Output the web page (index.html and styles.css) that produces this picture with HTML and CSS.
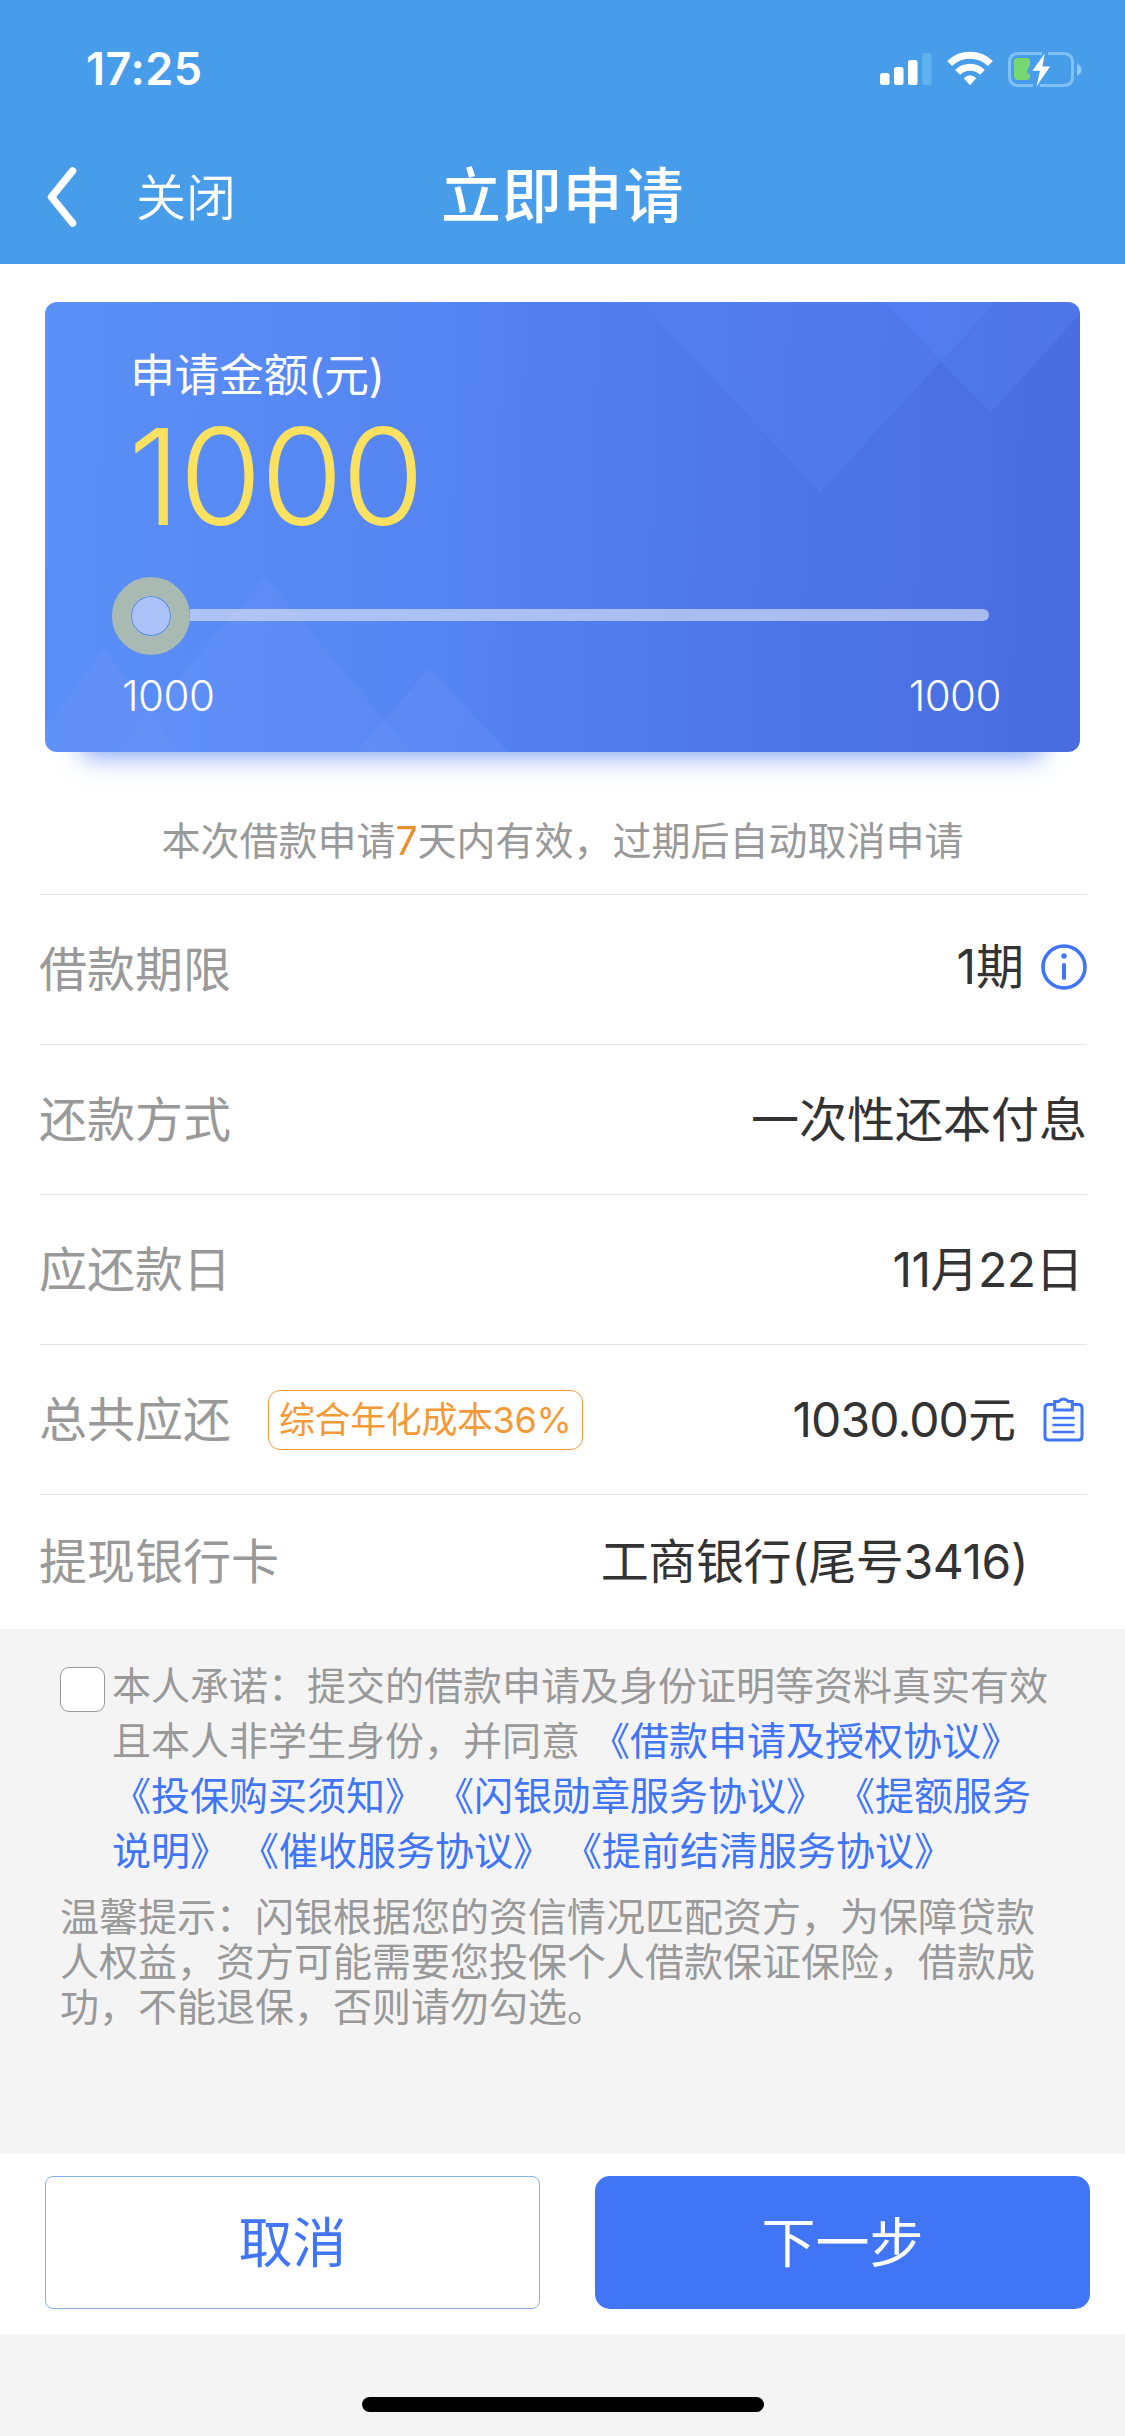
FILE: index.html
```
<!DOCTYPE html>
<html lang="zh-CN">
<head>
    <meta charset="UTF-8">
    <meta name="viewport" content="width=device-width, initial-scale=1.0">
    <title>立即申请</title>
    <link rel="stylesheet" href="styles.css">
</head>
<body>
    <header class="header">
        <div class="status-bar">
            <span class="time">17:25</span>
            <div class="status-icons">
                <svg width="52" height="36" viewBox="0 0 52 36" fill="#fff">
                    <rect x="0" y="22" width="9.5" height="12" rx="2.5"/>
                    <rect x="14" y="16" width="9.5" height="18" rx="2.5"/>
                    <rect x="28" y="9" width="9.5" height="25" rx="2.5"/>
                    <rect x="42" y="2" width="9.5" height="32" rx="2.5" fill="#60b2ed"/>
                </svg>
                <svg width="46" height="36" viewBox="0 0 46 36" fill="none" stroke="#fff" stroke-width="7">
                    <path d="M2.6 12.6 A29 29 0 0 1 43.4 12.6"/>
                    <path d="M10.6 21.4 A17.5 17.5 0 0 1 35.4 21.4"/>
                    <path d="M23 34.3 L16.8 27.2 Q23 21.4 29.2 27.2 Z" fill="#fff" stroke="none"/>
                </svg>
                <svg width="74" height="36" viewBox="0 0 74 36">
                    <path d="M34 2.5 H11 Q1.5 2.5 1.5 11.5 V25.5 Q1.5 34.5 11 34.5 H25 M31.5 34.5 H55 Q64.5 34.5 64.5 25.5 V11.5 Q64.5 2.5 55 2.5 H40" fill="none" stroke="#7fc1f2" stroke-width="3"/>
                    <path d="M69 12.5 Q73.5 15 73.5 18.5 Q73.5 22.5 69 25 Z" fill="#8fc9f4"/>
                    <path d="M9.5 7 H19 Q22 7 22 10 V14 L19 20.5 Q19 23 22 23 V26 Q22 29 19 29 H10 Q6 29 6 25 V10 Q6 7 9.5 7 Z" fill="#76d672"/>
                    <path d="M36.7 2.5 L24.4 19.8 H32 L28.4 35.5 L42 15.5 H34.5 Z" fill="#fff"/>
                </svg>
            </div>
        </div>
        <nav class="nav">
            <svg class="back" width="30" height="60" viewBox="0 0 30 60" fill="none" stroke="#fff" stroke-width="7.5" stroke-linecap="round" stroke-linejoin="round">
                <path d="M25.5 4 L4.5 30 L25.5 56"/>
            </svg>
            <span class="close">关闭</span>
            <h1 class="title">立即申请</h1>
        </nav>
    </header>

    <main class="main">
        <section class="card">
            <svg class="card-bg" width="1035" height="450" viewBox="0 0 1035 450" fill="#7a9dff" fill-opacity="0.2">
                <path d="M59.5 346 L0 427 V450 H133 Z"/>
                <path d="M220 275 L70 450 H366 Z"/>
                <path d="M384.5 366 L311 450 H463 Z"/>
                <g fill="#5f90ff" fill-opacity="0.24">
                    <path d="M596 0 L775 190 L951 0 Z"/>
                    <path d="M839 0 L945.5 111 L1035 12 V0 Z"/>
                </g>
            </svg>
            <div class="amount-label">申请金额(元)</div>
            <div class="amount">1000</div>
            <div class="slider">
                <div class="thumb"></div>
                <div class="track"></div>
            </div>
            <div class="range">
                <span>1000</span>
                <span>1000</span>
            </div>
        </section>
        <p class="notice">本次借款申请<em>7</em>天内有效，过期后自动取消申请</p>

        <div class="list">
            <div class="row">
                <span class="label">借款期限</span>
                <span class="value value-term">1期</span>
                <svg class="icon-info" width="46" height="46" viewBox="0 0 46 46">
                    <circle cx="23" cy="23" r="21" fill="none" stroke="#4076f6" stroke-width="3.6"/>
                    <circle cx="23" cy="12" r="2.7" fill="#4076f6"/>
                    <path d="M23 21 V34" stroke="#4076f6" stroke-width="4" stroke-linecap="round"/>
                </svg>
            </div>
            <div class="row">
                <span class="label">还款方式</span>
                <span class="value">一次性还本付息</span>
            </div>
            <div class="row">
                <span class="label">应还款日</span>
                <span class="value value-date">11月22日</span>
            </div>
            <div class="row">
                <span class="label">总共应还</span>
                <span class="badge">综合年化成本36%</span>
                <span class="value value-total">1030.00元</span>
                <svg class="icon-bill" width="41" height="45" viewBox="0 0 41 45" fill="none" stroke="#4076f6" stroke-width="3">
                    <path d="M11 7.5 H5.5 Q2 7.5 2 11 V39.5 Q2 43 5.5 43 H35.5 Q39 43 39 39.5 V11 Q39 7.5 35.5 7.5 H30"/>
                    <path d="M11.7 4.5 H15.5 Q20.5 -0.5 25.5 4.5 H29.3 V13 H11.7 Z"/>
                    <path d="M10.5 21 H30.5 M10.5 28 H30.5 M10.5 35 H30.5" stroke-width="2.6" stroke-linecap="round"/>
                </svg>
            </div>
            <div class="row row-bank">
                <span class="label">提现银行卡</span>
                <span class="value value-bank">工商银行(尾号3416)</span>
            </div>
        </div>
    </main>

    <section class="agreement">
        <div class="promise">
            <span class="checkbox"></span>
            <p class="promise-text">本人承诺：提交的借款申请及身份证明等资料真实有效<br>且本人非学生身份，并同意 <a>《借款申请及授权协议》</a><br><a>《投保购买须知》</a> <a>《闪银勋章服务协议》</a> <a>《提额服务<br>说明》</a> <a>《催收服务协议》</a> <a>《提前结清服务协议》</a></p>
        </div>
        <p class="tips">温馨提示：闪银根据您的资信情况匹配资方，为保障贷款<br>人权益，资方可能需要您投保个人借款保证保险，借款成<br>功，不能退保，否则请勿勾选。</p>
    </section>

    <footer class="footer">
        <button class="btn btn-cancel">取消</button>
        <button class="btn btn-next">下一步</button>
    </footer>
    <div class="home-indicator"></div>
</body>
</html>
```
FILE: styles.css
```
* {
    box-sizing: border-box;
}
body {
    margin: 0;
    width: 1125px;
    height: 2436px;
    background-color: #f4f4f4;
    font-family: Inter, "Noto Sans CJK SC", sans-serif;
    color: #333;
    text-spacing-trim: space-all;
    overflow: hidden;
}
p, h1 {
    margin: 0;
    font-weight: normal;
}
svg {
    display: block;
    flex: none;
}

/* header */
.header {
    height: 264px;
    background-color: #489dea;
    color: #fff;
}
.status-bar {
    display: flex;
    justify-content: space-between;
    height: 137px;
    padding: 51px 43px 0 86px;
}
.time {
    font-size: 45px;
    font-weight: 600;
    line-height: 36px;
    letter-spacing: 0.5px;
}
.status-icons {
    display: flex;
    gap: 15px;
}
.nav {
    display: flex;
    align-items: center;
    height: 120px;
    padding-left: 47px;
}
.close {
    width: 305px;
    margin-left: 59px;
    padding-top: 2px;
    font-size: 50px;
    font-weight: 350;
    line-height: 60px;
}
.title {
    font-size: 60px;
    font-weight: 500;
    line-height: 62px;
    letter-spacing: 0.8px;
    margin-top: -2px;
}

/* amount card */
.main {
    height: 1365px;
    padding: 38px 38px 0 40px;
    background-color: #fff;
}
.card {
    position: relative;
    width: 1035px;
    height: 450px;
    margin-left: 5px;
    padding: 46px 0 0 88px;
    border-radius: 12px;
    background: linear-gradient(92deg, #5b90f8, #5484f1 40%, #4d75e8 72%, #496ce1);
    box-shadow: 0 42px 24px -38px rgba(84, 128, 238, 0.75);
    color: #fff;
}
.card-bg {
    position: absolute;
    left: 0;
    top: 0;
    border-radius: 12px;
}
.amount-label {
    position: relative;
    margin-left: -3px;
    font-size: 45px;
    line-height: 56px;
    letter-spacing: -0.5px;
}
.amount {
    position: relative;
    margin-left: -5px;
    font-size: 134px;
    font-weight: 350;
    line-height: 144px;
    letter-spacing: -1.5px;
    color: #fae15f;
}
.slider {
    position: relative;
    display: flex;
    align-items: center;
    width: 877px;
    margin: 29px 0 0 -21px;
}
.thumb {
    width: 78px;
    height: 78px;
    border: 19px solid #a8bab1;
    border-radius: 50%;
    background-color: #abc3f8;
    box-shadow: inset 0 0 0 1px #4f8be8;
}
.track {
    flex: 1;
    height: 12px;
    margin-top: -2px;
    border-radius: 0 6px 6px 0;
    background-color: rgba(220, 226, 245, 0.65);
}
.range {
    position: relative;
    display: flex;
    justify-content: space-between;
    width: 879px;
    margin: 17px 0 0 -11px;
    font-size: 42px;
    font-weight: 350;
    line-height: 48px;
    letter-spacing: -0.5px;
}
.notice {
    margin-top: 61px;
    font-size: 39px;
    line-height: 56px;
    text-align: center;
    text-indent: -2px;
    color: #999;
}
.notice em {
    font-style: normal;
    color: #e6902f;
}

/* detail rows */
.list {
    margin-top: 25px;
}
.row {
    display: flex;
    align-items: center;
    height: 150px;
    border-top: 1px solid #e3e3e3;
    font-size: 48px;
    line-height: 56px;
}
.label {
    margin-left: -1px;
    color: #999;
}
.value {
    margin-left: auto;
}
.value-term {
    margin-top: -5px;
}
.value-date {
    margin-right: 4px;
    letter-spacing: -0.5px;
}
.value-total {
    letter-spacing: -0.9px;
}
.value-bank {
    margin-right: 59px;
    letter-spacing: -0.4px;
}
.row-bank {
    height: 135px;
}
.icon-info {
    margin: -6px 0 0 17px;
}
.icon-bill {
    margin: 0 3px 0 28px;
}
.badge {
    height: 60px;
    margin-left: 37px;
    padding: 0 11px 0 10px;
    border: 1px solid #f39a37;
    border-radius: 12px;
    font-size: 36px;
    line-height: 58px;
    letter-spacing: -0.4px;
    color: #f39a37;
}

/* agreement */
.agreement {
    height: 525px;
    padding: 29px 0 0 60px;
    font-size: 39px;
    color: #999;
    white-space: nowrap;
}
.promise {
    display: flex;
}
.checkbox {
    width: 45px;
    height: 45px;
    margin: 9px 7px 0 0;
    border: 1px solid #999;
    border-radius: 9px;
    background-color: #fff;
}
.promise-text {
    line-height: 55px;
}
.promise-text a {
    color: #4076f6;
}
.tips {
    margin-top: 16px;
    line-height: 45px;
}

/* bottom buttons */
.footer {
    display: flex;
    gap: 55px;
    height: 180px;
    padding: 22px 35px 0 45px;
    background-color: #fff;
}
.btn {
    width: 495px;
    height: 133px;
    padding: 3px 0 0;
    font-family: inherit;
    font-size: 54px;
    line-height: 128px;
}
.btn-cancel {
    border: 1px solid #86b0f0;
    border-radius: 8px;
    background-color: #fff;
    color: #4076f6;
}
.btn-next {
    border: none;
    border-radius: 15px;
    background-color: #4076f6;
    color: #fff;
}
.home-indicator {
    width: 402px;
    height: 15px;
    margin: 63px auto 0;
    border-radius: 8px;
    background-color: #000;
}
```
